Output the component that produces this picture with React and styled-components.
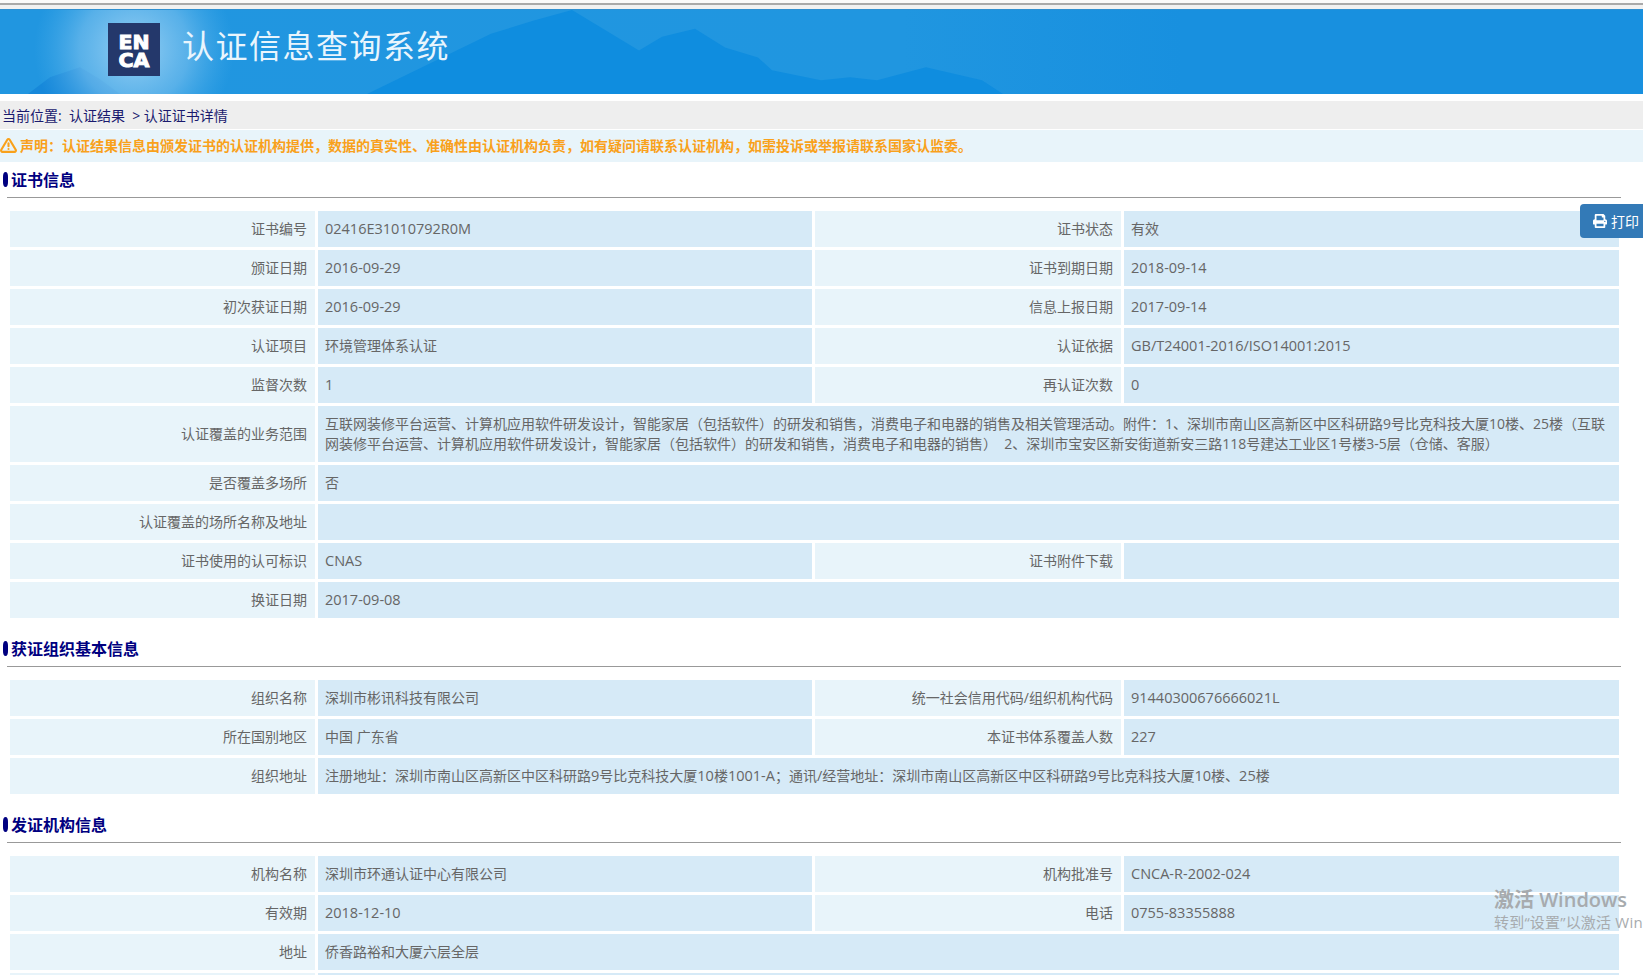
import React from 'react';
import styled, { createGlobalStyle } from 'styled-components';
import { FaPrint } from 'react-icons/fa';
import { FiAlertTriangle } from 'react-icons/fi';

const GlobalStyle = createGlobalStyle`
  html, body {
    margin: 0;
    padding: 0;
    background: #fff;
    overflow: hidden;
  }
  body {
    font-family: "Open Sans", "Noto Sans CJK SC", sans-serif;
    font-size: 14px;
    color: #666;
  }
`;

const certRows = [
  [['证书编号', '02416E31010792R0M'], ['证书状态', '有效']],
  [['颁证日期', '2016-09-29'], ['证书到期日期', '2018-09-14']],
  [['初次获证日期', '2016-09-29'], ['信息上报日期', '2017-09-14']],
  [['认证项目', '环境管理体系认证'], ['认证依据', 'GB/T24001-2016/ISO14001:2015']],
  [['监督次数', '1'], ['再认证次数', '0']],
  [['认证覆盖的业务范围', '互联网装修平台运营、计算机应用软件研发设计，智能家居（包括软件）的研发和销售，消费电子和电器的销售及相关管理活动。附件：1、深圳市南山区高新区中区科研路9号比克科技大厦10楼、25楼（互联网装修平台运营、计算机应用软件研发设计，智能家居（包括软件）的研发和销售，消费电子和电器的销售）  2、深圳市宝安区新安街道新安三路118号建达工业区1号楼3-5层（仓储、客服）']],
  [['是否覆盖多场所', '否']],
  [['认证覆盖的场所名称及地址', '']],
  [['证书使用的认可标识', 'CNAS'], ['证书附件下载', '']],
  [['换证日期', '2017-09-08']],
];

const orgRows = [
  [['组织名称', '深圳市彬讯科技有限公司'], ['统一社会信用代码/组织机构代码', '91440300676666021L']],
  [['所在国别地区', '中国 广东省'], ['本证书体系覆盖人数', '227']],
  [['组织地址', '注册地址：深圳市南山区高新区中区科研路9号比克科技大厦10楼1001-A；通讯/经营地址：深圳市南山区高新区中区科研路9号比克科技大厦10楼、25楼']],
];

const issuerRows = [
  [['机构名称', '深圳市环通认证中心有限公司'], ['机构批准号', 'CNCA-R-2002-024']],
  [['有效期', '2018-12-10'], ['电话', '0755-83355888']],
  [['地址', '侨香路裕和大厦六层全层']],
  [['', '']],
];

// latin runs are a touch wider than the cjk text around them (one-liners only)
const withLatin = (text) =>
  text.length > 100
    ? text
    : text
        .split(/([A-Za-z0-9/:-]+)/)
        .map((part, i) => (i % 2 ? <Latin key={i}>{part}</Latin> : part));

const InfoGrid = ({ rows }) => (
  <Grid>
    {rows.map((row) =>
      row.map(([label, value]) => (
        <React.Fragment key={label + value}>
          <Label>{label}</Label>
          <Value $wide={row.length === 1}>
            <span>{withLatin(value)}</span>
          </Value>
        </React.Fragment>
      ))
    )}
  </Grid>
);

const Section = ({ title, rows }) => (
  <SectionBox>
    <SectionTitle>{title}</SectionTitle>
    <InfoGrid rows={rows} />
  </SectionBox>
);

const App = () => (
  <Page>
    <GlobalStyle />
    <TopStrip />
    <Banner>
      <Mountains viewBox="0 0 1643 85" preserveAspectRatio="none">
        <defs>
          <radialGradient id="glow" cx="134" cy="40" r="100" gradientUnits="userSpaceOnUse">
            <stop offset="0" stopColor="#9fd4f5" stopOpacity="0.95" />
            <stop offset="0.55" stopColor="#7cc2ef" stopOpacity="0.6" />
            <stop offset="1" stopColor="#4fb0ea" stopOpacity="0" />
          </radialGradient>
        </defs>
        <path
          fill="#0f8ddf"
          d="M367 85L491 24L533 11L572 0L608 22L639 41L662 27L695 19L725 38L758 48L772 61L821 71L850 68L877 71L926 58L982 71L1003 85Z"
        />
        <path fill="#1688da" d="M28 85L50 68L80 58L100 70L120 85Z" />
        <rect x="0" y="0" width="300" height="85" fill="url(#glow)" />
      </Mountains>
      <Logo viewBox="0 0 52 53">
        <rect width="52" height="53" fill="#24386b" />
        <LogoText>
          <tspan x="10.5" y="26" textLength="31" lengthAdjust="spacingAndGlyphs">EN</tspan>
          <tspan x="10.5" y="43.5" textLength="31" lengthAdjust="spacingAndGlyphs">CA</tspan>
        </LogoText>
      </Logo>
      <BannerTitle>认证信息查询系统</BannerTitle>
    </Banner>
    <Crumb>当前位置:&nbsp; 认证结果 &nbsp;&gt; 认证证书详情</Crumb>
    <Notice>
      <FiAlertTriangle size={17} strokeWidth={3} />
      <span>声明：认证结果信息由颁发证书的认证机构提供，数据的真实性、准确性由认证机构负责，如有疑问请联系认证机构，如需投诉或举报请联系国家认监委。</span>
    </Notice>
    <Section title="证书信息" rows={certRows} />
    <Section title="获证组织基本信息" rows={orgRows} />
    <Section title="发证机构信息" rows={issuerRows} />
    <PrintButton>
      <FaPrint size={14} />
      打印
    </PrintButton>
    <Watermark>
      <strong>激活 Windows</strong>
      <span>转到“设置”以激活 Windows。</span>
    </Watermark>
  </Page>
);

const Page = styled.div`
  position: relative;
  width: 1643px;
  height: 975px;
  overflow: hidden;
`;

const TopStrip = styled.div`
  height: 9px;
  background: linear-gradient(#fafafa 0 3px, #a9a9a9 3px 5px, #f1f1f1 5px);
`;

const Banner = styled.header`
  position: relative;
  height: 85px;
  background: linear-gradient(90deg, #2196e0 0, #2096e0 55%, #1890df 72%);
  display: flex;
  align-items: flex-start;
  padding-left: 108px;
  border-top: 1px solid #2f8fd0;
  box-sizing: border-box;
`;

const Mountains = styled.svg`
  position: absolute;
  inset: 0;
  width: 100%;
  height: 100%;
`;

const Logo = styled.svg`
  position: relative;
  width: 52px;
  height: 53px;
  margin-top: 13px;
  flex: none;
`;

const LogoText = styled.text`
  font-family: "DejaVu Sans", sans-serif;
  font-weight: 700;
  font-size: 20px;
  fill: #fff;
  stroke: #fff;
  stroke-width: 1px;
`;

const BannerTitle = styled.h1`
  position: relative;
  margin: 11px 0 0 22px;
  font-family: "Noto Sans CJK SC", sans-serif;
  font-size: 32px;
  line-height: 46px;
  font-weight: 400;
  letter-spacing: 1.5px;
  color: #e9f5fd;
`;

const Crumb = styled.div`
  margin-top: 7px;
  height: 28px;
  line-height: 30px;
  padding-left: 2px;
  background: #eee;
  color: #1a1a6e;
  font-size: 14px;
  white-space: nowrap;
`;

const Notice = styled.div`
  margin-top: 1px;
  height: 32px;
  box-sizing: border-box;
  padding-bottom: 2px;
  display: flex;
  align-items: center;
  gap: 3px;
  background: #e8f4fa;
  color: #f9a11b;
  font-size: 14px;
  font-weight: 700;
  white-space: nowrap;
`;

const SectionBox = styled.section`
  padding-top: 1px;
  & + & {
    padding-top: 14px;
  }
`;

const SectionTitle = styled.h2`
  position: relative;
  margin: 0 22px 13px 7px;
  height: 34px;
  line-height: 34px;
  padding-left: 4px;
  border-bottom: 1px solid #999;
  color: #000080;
  font-size: 16px;
  font-weight: 700;
  &::before {
    content: '';
    position: absolute;
    left: -4px;
    top: 9px;
    width: 5px;
    height: 15px;
    border-radius: 3px / 6px;
    background: #000080;
  }
`;

const Grid = styled.div`
  display: grid;
  grid-template-columns: 305px 494px 306px 495px;
  gap: 3px;
  margin-left: 10px;
`;

const Label = styled.div`
  min-height: 36px;
  display: flex;
  align-items: center;
  justify-content: flex-end;
  padding: 0 8px 2px 0;
  box-sizing: border-box;
  background: #e8f4fa;
`;

const Value = styled.div`
  grid-column: ${(p) => (p.$wide ? 'span 3' : 'auto')};
  min-height: 36px;
  display: flex;
  align-items: center;
  padding: 8px 8px 8px 7px;
  box-sizing: border-box;
  line-height: 20px;
  background: #d6eaf7;
  white-space: pre-wrap;
`;

const Latin = styled.span`
  font-size: 14.5px;
`;

const PrintButton = styled.button`
  position: absolute;
  top: 204px;
  left: 1580px;
  width: 63px;
  height: 34px;
  display: flex;
  align-items: center;
  gap: 4px;
  padding: 0 0 0 13px;
  border: 0;
  border-radius: 4px 0 0 4px;
  background: #337ab7;
  color: #fff;
  font-family: inherit;
  font-size: 14px;
`;

const Watermark = styled.div`
  position: absolute;
  top: 886px;
  left: 1494px;
  display: flex;
  flex-direction: column;
  white-space: nowrap;
  color: #a7abae;
  strong {
    font-size: 20px;
    line-height: 27px;
    font-weight: 600;
  }
  span {
    font-size: 15px;
    line-height: 19px;
    letter-spacing: 0.2px;
  }
`;

export default App;
